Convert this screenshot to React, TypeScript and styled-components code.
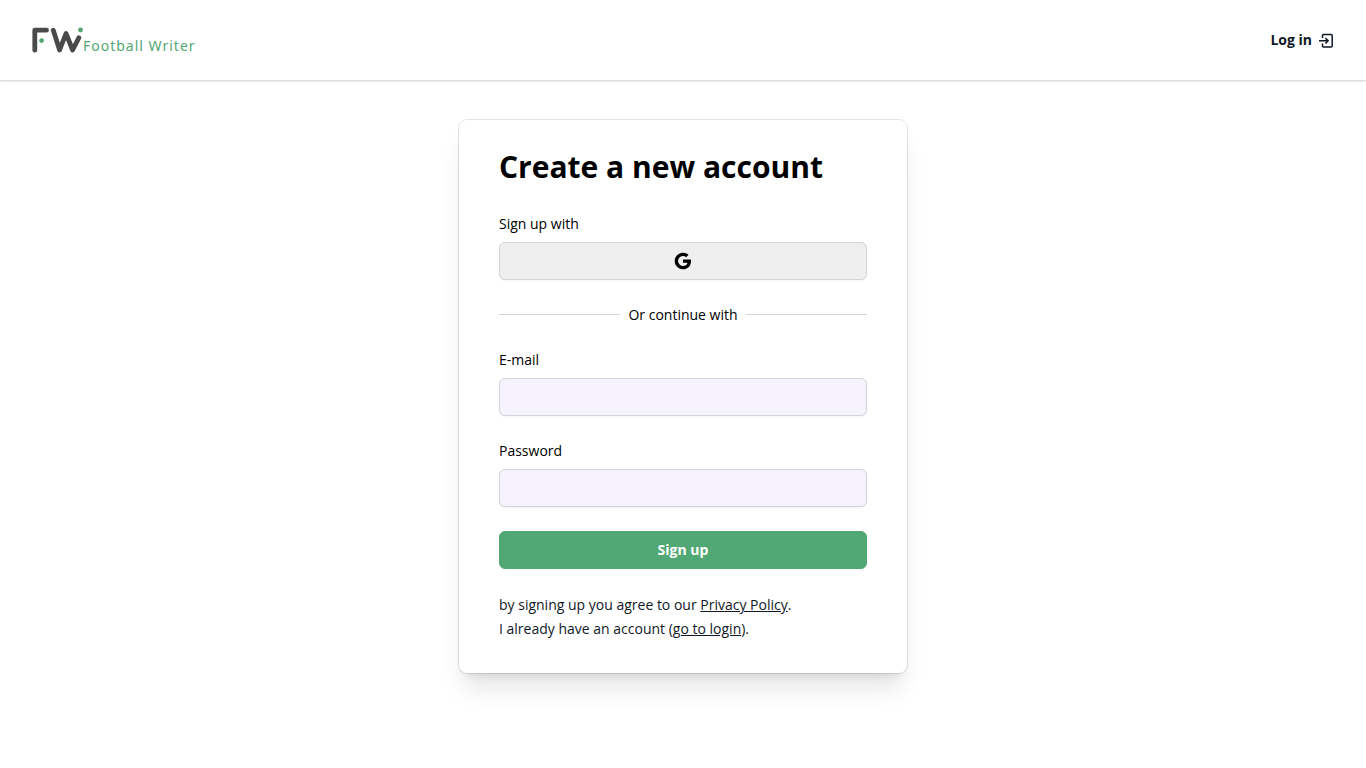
import React from "react";
import styled, { createGlobalStyle } from "styled-components";
import { RiGoogleFill } from "react-icons/ri";

const GlobalStyle = createGlobalStyle`
  *, *::before, *::after { box-sizing: border-box; }
  body {
    margin: 0;
    background: #fff;
    color: #000;
    font-family: "Open Sans", "Noto Sans", sans-serif;
    font-size: 14px;
    line-height: 21px;
  }
`;

const Header = styled.header`
  display: flex;
  align-items: center;
  justify-content: space-between;
  height: 80px;
  padding: 0 32px;
  background: #fff;
  box-shadow: 0 1px 2px rgba(0, 0, 0, 0.2);
`;

const LogoLink = styled.a`
  display: flex;
  align-items: flex-end;
  color: #52a874;
  text-decoration: none;
`;

const LogoMark = styled.svg`
  display: block;
  width: 51px;
  height: 28px;
`;

const LogoText = styled.span`
  font-family: "Noto Sans", "Open Sans", sans-serif;
  font-size: 14px;
  font-weight: 400;
  line-height: 16px;
  letter-spacing: 1px;
`;

const LoginLink = styled.a`
  display: flex;
  align-items: center;
  gap: 6px;
  color: #111827;
  font-weight: 700;
  line-height: 20px;
  text-decoration: none;
`;

const LoginIcon = styled.svg`
  display: block;
  width: 16px;
  height: 16px;
`;

const Main = styled.main`
  display: flex;
  justify-content: center;
  padding: 40px 16px;
`;

const Card = styled.section`
  width: 100%;
  max-width: 448px;
  padding: 32px 40px;
  border-radius: 8px;
  background: #fff;
  box-shadow:
    0 0 0 1px rgba(0, 0, 0, 0.1),
    0 20px 25px -5px rgba(0, 0, 0, 0.1),
    0 8px 10px -6px rgba(0, 0, 0, 0.1);
`;

const Title = styled.h1`
  margin: 0 0 31px;
  font-size: 30px;
  font-weight: 700;
  line-height: 30px;
`;

const Form = styled.form`
  display: flex;
  flex-direction: column;
  gap: 24px;
`;

const Field = styled.div`
  display: flex;
  flex-direction: column;
  gap: 8px;
`;

const Input = styled.input`
  width: 100%;
  height: 38px;
  padding: 8px 12px;
  border: 1px solid #d1d5db;
  border-radius: 6px;
  background: #f6f3ff;
  box-shadow: 0 1px 2px rgba(0, 0, 0, 0.05);
  font: inherit;
`;

const Button = styled.button<{ $primary?: boolean }>`
  display: flex;
  align-items: center;
  justify-content: center;
  width: 100%;
  height: 38px;
  padding: 0 16px;
  border: 1px solid ${(p) => (p.$primary ? "#52a874" : "#d4d4d4")};
  border-radius: 6px;
  background: ${(p) => (p.$primary ? "#52a874" : "#efefef")};
  color: ${(p) => (p.$primary ? "#fff" : "#000")};
  box-shadow: 0 1px 2px rgba(0, 0, 0, ${(p) => (p.$primary ? 0 : 0.05)});
  font: inherit;
  font-weight: 700;
  line-height: 20px;
  cursor: pointer;
`;

const Divider = styled.div`
  display: flex;
  align-items: center;
  gap: 8px;

  &::before,
  &::after {
    content: "";
    flex: 1;
    height: 1px;
    background: #d4d4d8;
  }
`;

const Notes = styled.p`
  margin: 0;
  color: #111827;
  line-height: 24px;
`;

const TextLink = styled.a`
  color: inherit;
  text-decoration: underline;
`;

export default function App() {
  return (
    <>
      <GlobalStyle />
      <Header>
        <LogoLink href="#" aria-label="Football Writer">
          <LogoMark viewBox="0 0 51 28" fill="none" aria-hidden="true">
            <g stroke="#4a4a4a" strokeWidth="4.8" strokeLinecap="round" strokeLinejoin="round">
              <path d="M2.8 24.2V4.2H14.5" />
              <path d="M21.3 4.2L27.6 24L34 7.5L40.6 24L46.8 11.8" />
            </g>
            <circle cx="9.6" cy="14.6" r="2.4" fill="#52a874" />
            <circle cx="48.5" cy="4" r="2.4" fill="#52a874" />
          </LogoMark>
          <LogoText>Football Writer</LogoText>
        </LogoLink>
        <LoginLink href="#login">
          Log in
          <LoginIcon viewBox="0 0 16 16" fill="none" stroke="currentColor" strokeWidth="1.5" aria-hidden="true">
            <path d="M4.5 6V3.5Q4.5 2.5 5.5 2.5H13.2Q14.2 2.5 14.2 3.5V14Q14.2 15 13.2 15H5.5Q4.5 15 4.5 14V11.5" />
            <path d="M1 8.8H9.8M7.4 6.1L10.1 8.8L7.4 11.5" />
          </LoginIcon>
        </LoginLink>
      </Header>
      <Main>
        <Card>
          <Title>Create a new account</Title>
          <Form onSubmit={(e) => e.preventDefault()}>
            <Field>
              <span id="providers">Sign up with</span>
              <Button type="button" aria-label="Google" aria-describedby="providers">
                <RiGoogleFill size={20} />
              </Button>
            </Field>
            <Divider>Or continue with</Divider>
            <Field>
              <label htmlFor="email">E-mail</label>
              <Input id="email" type="email" />
            </Field>
            <Field>
              <label htmlFor="password">Password</label>
              <Input id="password" type="password" />
            </Field>
            <Button type="submit" $primary>
              Sign up
            </Button>
            <Notes>
              by signing up you agree to our <TextLink href="#privacy">Privacy Policy</TextLink>.
              <br />I already have an account (<TextLink href="#login">go to login</TextLink>).
            </Notes>
          </Form>
        </Card>
      </Main>
    </>
  );
}
